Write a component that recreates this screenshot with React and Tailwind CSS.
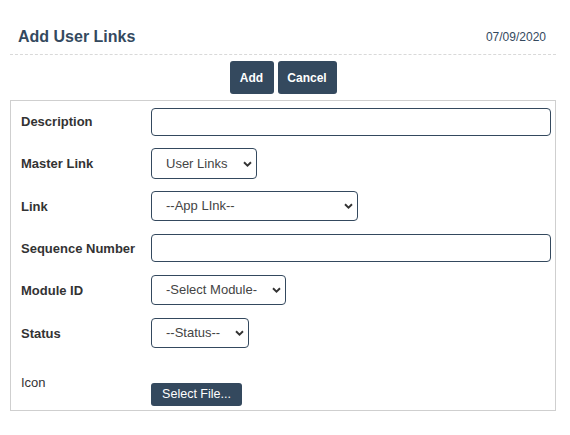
import React from "react";

function Chevron() {
  return (
    <svg
      className="pointer-events-none absolute right-[5px] top-1/2 -translate-y-1/2"
      width="9"
      height="6"
      viewBox="0 0 9 6"
    >
      <path d="M1 1.2 L4.5 4.6 L8 1.2" fill="none" stroke="#333" strokeWidth="1.9" />
    </svg>
  );
}

function Select({ width, height, value }) {
  return (
    <div className="relative" style={{ width, height }}>
      <select
        defaultValue={value}
        className="h-full w-full appearance-none rounded-[4px] border border-[#34495e] bg-white pl-[14px] pr-[20px] text-[13px] text-[#444] outline-none font-['Liberation_Sans',Arial,sans-serif]"
      >
        <option>{value}</option>
      </select>
      <Chevron />
    </div>
  );
}

function Row({ label, h, children }) {
  return (
    <div className="grid grid-cols-[140px_1fr] items-center pr-[4px]" style={{ height: h }}>
      <div className="pl-[10px] text-[13px] font-bold leading-[15px] text-[#333]">{label}</div>
      <div className="flex">{children}</div>
    </div>
  );
}

export default function App() {
  return (
    <div className="h-[435px] w-[570px] bg-white font-['Liberation_Sans',Arial,sans-serif]">
      <div className="ml-[10px] w-[546px]">
        <div className="flex items-start justify-between border-b border-dashed border-[#d9d9d9] pb-[7px] pl-[8px] pr-[10px] pt-[27px]">
          <div className="text-[16px] font-bold leading-[20px] text-[#34495e]">
            Add User Links
          </div>
          <div className="text-[12px] leading-[20px] text-[#34495e]">07/09/2020</div>
        </div>
        <div className="mt-[6px] flex justify-center gap-[4px]">
          <button className="h-[33px] w-[44px] rounded-[3px] bg-[#34495e] text-[12px] font-bold text-white">
            Add
          </button>
          <button className="h-[33px] w-[59px] rounded-[3px] bg-[#34495e] text-[12px] font-bold text-white">
            Cancel
          </button>
        </div>
        <div className="mt-[6px] border border-[#cfcfcf]">
          <Row label="Description" h={41}>
            <input className="h-[28px] w-full rounded-[4px] border border-[#34495e] px-2 text-[13px] outline-none" />
          </Row>
          <Row label="Master Link" h={43}>
            <Select width={106} height={31} value="User Links" />
          </Row>
          <Row label="Link" h={42}>
            <Select width={207} height={30} value="--App LInk--" />
          </Row>
          <Row label="Sequence Number" h={42}>
            <input className="h-[28px] w-full rounded-[4px] border border-[#34495e] px-2 text-[13px] outline-none" />
          </Row>
          <Row label="Module ID" h={42}>
            <Select width={135} height={30} value="-Select Module-" />
          </Row>
          <Row label="Status" h={44}>
            <Select width={98} height={30} value="--Status--" />
          </Row>
          <div className="grid h-[55px] grid-cols-[140px_1fr] items-start pr-[4px]">
            <div className="pl-[10px] pt-[20px] text-[13px] leading-[15px] text-[#333]">Icon</div>
            <div className="pt-[26px]">
              <button className="h-[23px] w-[91px] rounded-[3px] bg-[#34495e] text-[12.5px] leading-none text-white">
                Select File...
              </button>
            </div>
          </div>
        </div>
      </div>
    </div>
  );
}
